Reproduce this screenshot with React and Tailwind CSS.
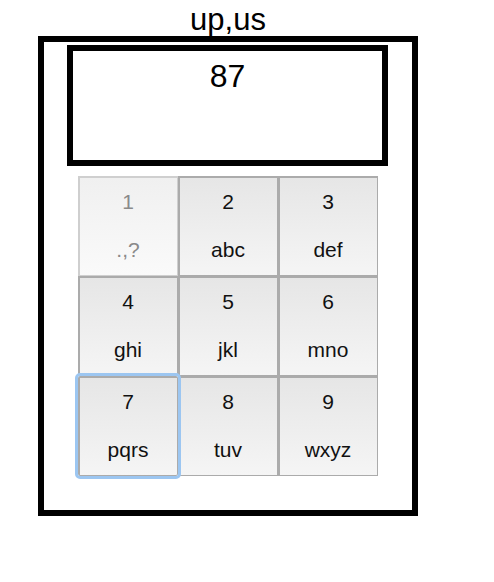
const keys = [
  { num: '1', letters: '.,?', disabled: true },
  { num: '2', letters: 'abc' },
  { num: '3', letters: 'def' },
  { num: '4', letters: 'ghi' },
  { num: '5', letters: 'jkl' },
  { num: '6', letters: 'mno' },
  { num: '7', letters: 'pqrs', focused: true },
  { num: '8', letters: 'tuv' },
  { num: '9', letters: 'wxyz' }
]

function Key({ num, letters, disabled, focused }) {
  let cls =
    'relative flex h-[100px] w-[100px] flex-col items-center border-l-2 border-t-2 border-r border-b pt-[12px] pr-[1px] bg-gradient-to-b'
  if (disabled) {
    cls += ' border-[#cfcfcf] from-[#f0f0f0] to-[#fafafa] text-[#8a8a8a]'
  } else {
    cls += ' border-[#ababab] from-[#e6e6e6] to-[#f5f5f5] text-[#111]'
  }
  if (focused) {
    cls += ' z-10 rounded-[2px] outline-[3px] outline-solid outline-[#9cc6f1]'
  }

  return (
    <button type="button" className={cls}>
      <span className="text-[21px] leading-[24px]">{num}</span>
      <span className="mt-[24px] text-[21px] leading-[24px]">{letters}</span>
    </button>
  )
}

export default function App() {
  return (
    <div className="ml-[38px] w-[380px] bg-white font-['Liberation_Sans',Arial,sans-serif] text-black">
      <div className="pt-[3px] text-center text-[31px] leading-[33px]">up,us</div>
      <div className="h-[480px] border-[6px] border-black">
        <div className="ml-[23px] mt-[3px] h-[121px] w-[321px] border-[6px] border-black pt-[1px] text-center text-[32px]">
          87
        </div>
        <div className="ml-[34px] mt-[10px] grid w-[300px] grid-cols-3">
          {keys.map(k => (
            <Key key={k.num} {...k} />
          ))}
        </div>
      </div>
    </div>
  )
}
